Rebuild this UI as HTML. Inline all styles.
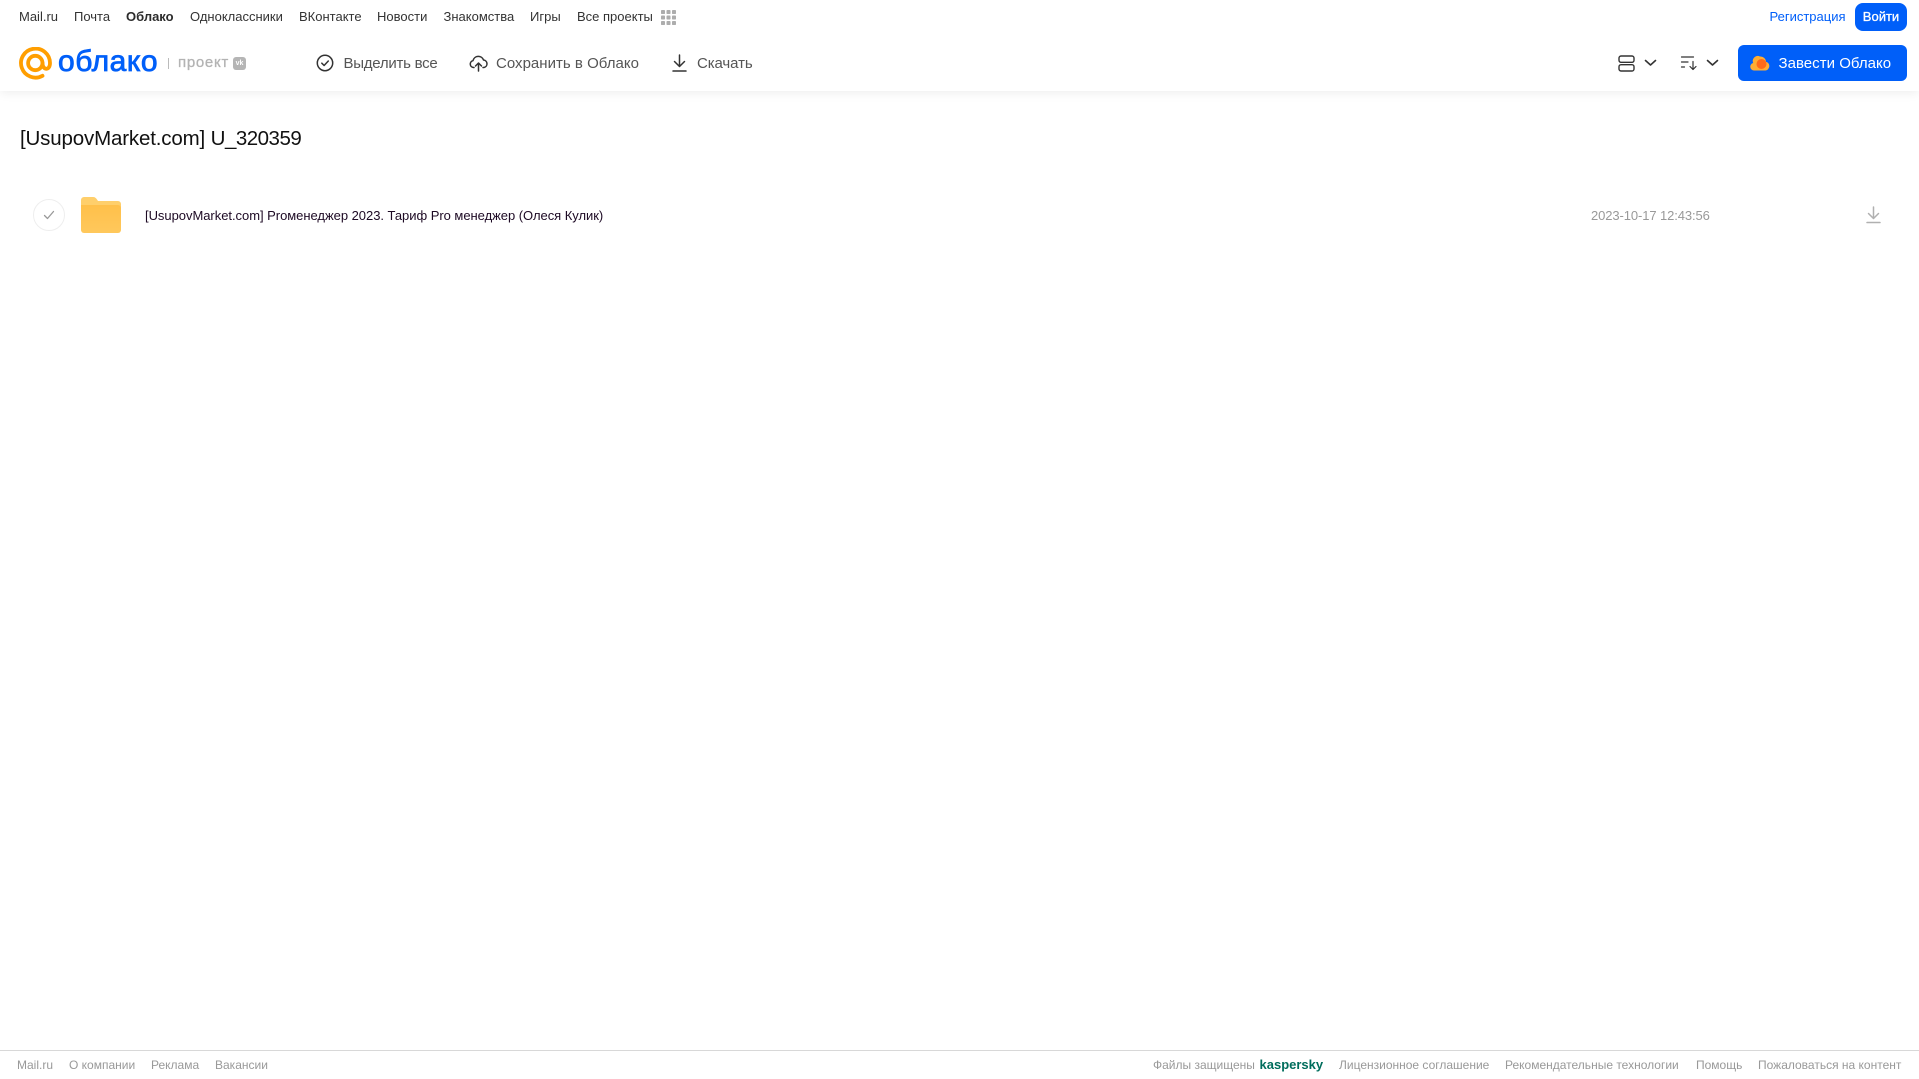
<!DOCTYPE html>
<html lang="ru">
<head>
<meta charset="utf-8">
<title>Облако</title>
<style>
html,body{margin:0;padding:0;background:#fff}
body{position:relative;width:1919px;height:1079px;overflow:hidden;font-family:"Liberation Sans","DejaVu Sans",sans-serif}
a,span.t,div.t{position:absolute;white-space:nowrap;text-decoration:none}
svg{position:absolute;display:block}
header{position:absolute;left:0;top:0;width:1919px;height:91px;background:#fff;box-shadow:0 2px 10px rgba(0,0,0,.07)}
.n{top:9px;font-size:13px;line-height:16px;color:#333}
.a{top:54.500px;font-size:15px;line-height:18px;color:#555}
.f{top:1058px;font-size:12px;line-height:15px;color:#999}
</style>
</head>
<body>
<header>
<a class="n" style="left:19px">Mail.ru</a>
<a class="n" style="left:74px">Почта</a>
<a class="n" style="left:126px;font-weight:700;color:#2c2c2c">Облако</a>
<a class="n" style="left:190px">Одноклассники</a>
<a class="n" style="left:299px">ВКонтакте</a>
<a class="n" style="left:377px">Новости</a>
<a class="n" style="left:443.500px">Знакомства</a>
<a class="n" style="left:530px">Игры</a>
<a class="n" style="left:577px">Все проекты</a>
<svg style="left:661px;top:10px" width="15" height="15" viewBox="0 0 15 15" fill="#adadad"><rect x="0" y="0" width="4" height="4" rx=".8"/><rect x="5.500" y="0" width="4" height="4" rx=".8"/><rect x="11" y="0" width="4" height="4" rx=".8"/><rect x="0" y="5.500" width="4" height="4" rx=".8"/><rect x="5.500" y="5.500" width="4" height="4" rx=".8"/><rect x="11" y="5.500" width="4" height="4" rx=".8"/><rect x="0" y="11" width="4" height="4" rx=".8"/><rect x="5.500" y="11" width="4" height="4" rx=".8"/><rect x="11" y="11" width="4" height="4" rx=".8"/></svg>
<a class="n" style="left:1769.500px;color:#005ff9">Регистрация</a>
<a style="left:1855px;top:3px;width:52px;height:28px;border-radius:8px;background:#005ff9;color:#fff;font-size:13px;line-height:28px;text-align:center;-webkit-text-stroke:.3px #fff">Войти</a>

<svg style="left:19px;top:47px" width="33" height="33" viewBox="0 0 33 33" fill="none" stroke="#ff9e00" stroke-width="3.800" stroke-linecap="round"><circle cx="16.300" cy="16" r="7.200"/><path d="M23.500 28.800A14.500 14.500 0 1 1 31 16c0 8-7.500 7.500-7.500 0"/></svg>
<div class="t" style="left:58px;top:43px;font-size:30px;line-height:38px;color:#005ff9;letter-spacing:.55px;-webkit-text-stroke:.8px #005ff9">облако</div>
<div class="t" style="left:168px;top:58px;width:1px;height:11px;background:#bbb"></div>
<div class="t" style="left:178px;top:54px;font-size:15px;line-height:18px;color:#b3b3b3;letter-spacing:.7px;-webkit-text-stroke:.3px #b3b3b3">проект</div>
<div class="t" style="left:233px;top:57px;width:13px;height:13px;border-radius:3px;background:#b5b5b5;color:#fff;font-size:7px;font-weight:700;line-height:13px;text-align:center">vk</div>

<svg style="left:316px;top:54px" width="18" height="18" viewBox="0 0 18 18" fill="none" stroke="#333" stroke-width="1.500" stroke-linecap="round" stroke-linejoin="round"><circle cx="9" cy="9" r="7.700"/><path d="M5.800 9.200l2.300 2.300 4.200-4.500"/></svg>
<a class="a" style="left:343.500px;letter-spacing:-.25px">Выделить все</a>
<svg style="left:469px;top:54px" width="19" height="18" viewBox="0 0 19 18" fill="none" stroke="#333" stroke-width="1.500" stroke-linecap="round" stroke-linejoin="round"><path d="M5 13.500H4.500A3.500 3.500 0 0 1 4 6.600 5.500 5.500 0 0 1 14.500 6a3.800 3.800 0 0 1 .5 7.500h-1"/><path d="M9.500 17V9.500M6.500 12l3-3 3 3"/></svg>
<a class="a" style="left:496px;letter-spacing:.02px">Сохранить в Облако</a>
<svg style="left:671.500px;top:54px" width="15" height="18" viewBox="0 0 15 18" fill="none" stroke="#333" stroke-width="1.500" stroke-linecap="round" stroke-linejoin="round"><path d="M7.500 1v11M2.500 7.500l5 5 5-5M1 17h13"/></svg>
<a class="a" style="left:697px;letter-spacing:-.1px">Скачать</a>

<svg style="left:1618px;top:55px" width="17" height="17" viewBox="0 0 17 17" fill="none" stroke="#333" stroke-width="1.400"><rect x="1" y="1" width="15" height="6.300" rx="2"/><rect x="1" y="9.700" width="15" height="6.300" rx="2"/></svg>
<svg style="left:1644px;top:59px" width="13" height="8" viewBox="0 0 13 8" fill="none" stroke="#333" stroke-width="1.600" stroke-linecap="round" stroke-linejoin="round"><path d="M1.500 1.500l5 4.500 5-4.500"/></svg>
<svg style="left:1680px;top:55px" width="18" height="16" viewBox="0 0 18 16" fill="none" stroke="#333" stroke-width="1.200" stroke-linecap="round" stroke-linejoin="round"><path d="M1.500 2h12M1.500 7h6.500M1.500 12h3M13 6.500v8M10 11.500l3 3 3-3"/></svg>
<svg style="left:1706px;top:59px" width="13" height="8" viewBox="0 0 13 8" fill="none" stroke="#333" stroke-width="1.600" stroke-linecap="round" stroke-linejoin="round"><path d="M1.500 1.500l5 4.500 5-4.500"/></svg>

<div class="t" style="left:1738px;top:45px;width:169px;height:36px;border-radius:6px;background:#005ff9"></div>
<svg style="left:1750px;top:54px" width="20" height="17" viewBox="0 0 20 17"><path d="M4 16.500a3.800 3.800 0 0 1-.8-7.500A5 5 0 0 1 10 2.500a5.500 5.500 0 0 1 6 5.200 4.500 4.500 0 0 1-.5 8.800z" fill="#ffad33"/><circle cx="11.500" cy="10" r="5" fill="#ff6a1a"/></svg>
<a class="a" style="left:1778.500px;color:#fff;letter-spacing:.03px">Завести Облако</a>
</header>

<div class="t" style="left:20px;top:127px;font-size:20.500px;line-height:24px;color:#111;letter-spacing:-.16px">[UsupovMarket.com] <span style="letter-spacing:-.5px">U_320359</span></div>

<div class="t" style="left:33px;top:199px;width:30px;height:30px;border:1px solid #eee;border-radius:50%"></div>
<svg style="left:43px;top:210px" width="12" height="10" viewBox="0 0 12 10" fill="none" stroke="#999" stroke-width="1.300" stroke-linecap="round" stroke-linejoin="round"><path d="M1.500 5.500l3 3 6-7"/></svg>
<svg style="left:81px;top:197px" width="40" height="36" viewBox="0 0 40 36"><defs><linearGradient id="g" x1="0" y1="0" x2="0" y2="1"><stop offset="0" stop-color="#ffc04a"/><stop offset="1" stop-color="#ffc85c"/></linearGradient></defs><path d="M0 3a3 3 0 0 1 3-3h9c2 0 3 1 4 2.500L17 4h20a3 3 0 0 1 3 3v5H0z" fill="#ffcf6b"/><path d="M0 8h37a3 3 0 0 1 3 3v22a3 3 0 0 1-3 3H3a3 3 0 0 1-3-3z" fill="url(#g)"/></svg>
<div class="t" style="left:145px;top:208px;font-size:13px;line-height:16px;color:#1d0a24;letter-spacing:-.035px">[UsupovMarket.com] Proменеджер 2023. Тариф Pro менеджер (Олеся Кулик)</div>
<div class="t" style="left:1591px;top:208px;font-size:13px;line-height:16px;color:#999;letter-spacing:-.1px">2023-10-17 12:43:56</div>
<svg style="left:1865.500px;top:206px" width="15" height="18" viewBox="0 0 15 18" fill="none" stroke="#b0b0b0" stroke-width="1.500" stroke-linecap="round" stroke-linejoin="round"><path d="M7.500 1v11M2.500 7.500l5 5 5-5M1 16.500h13"/></svg>

<footer>
<div class="t" style="left:0;top:1050px;width:1919px;height:1px;background:#d8d8d8"></div>
<a class="f" style="left:17px">Mail.ru</a>
<a class="f" style="left:69px">О компании</a>
<a class="f" style="left:151px">Реклама</a>
<a class="f" style="left:215px">Вакансии</a>
<span class="t f" style="left:1153px">Файлы защищены</span>
<span class="t" style="left:1259.500px;top:1056px;font-size:13px;line-height:17px;font-weight:700;color:#006d5c">kaspersky</span>
<a class="f" style="left:1339px">Лицензионное соглашение</a>
<a class="f" style="left:1505px">Рекомендательные технологии</a>
<a class="f" style="left:1696px">Помощь</a>
<a class="f" style="left:1758px">Пожаловаться на контент</a>
</footer>
</body>
</html>
